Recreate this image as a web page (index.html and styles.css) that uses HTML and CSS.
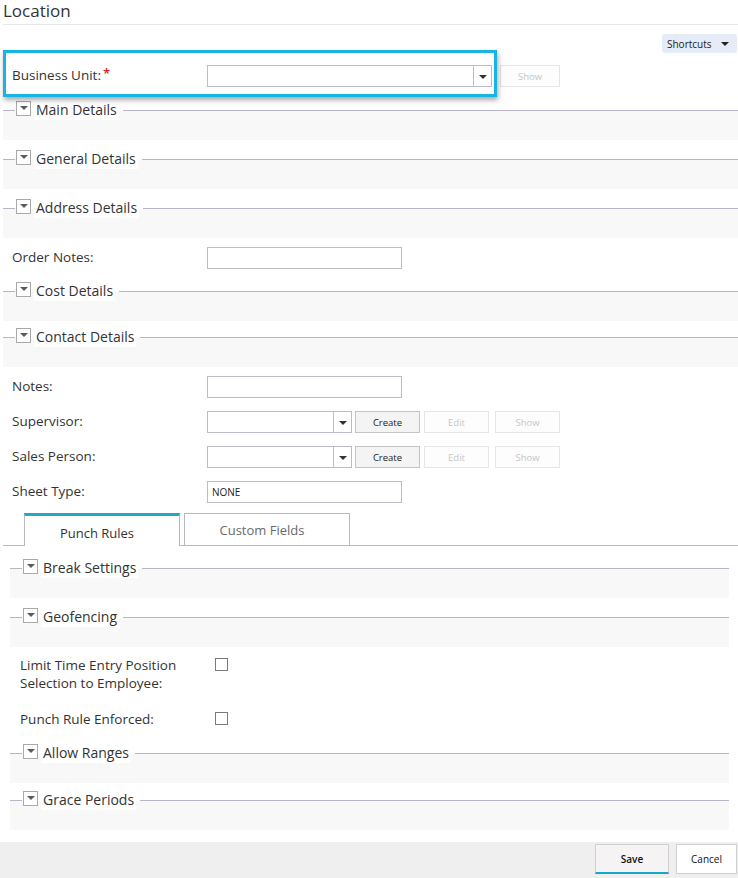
FILE: index.html
```html
<!DOCTYPE html>
<html lang="en">
<head>
<meta charset="utf-8">
<title>Location</title>
<link rel="stylesheet" href="styles.css">
</head>
<body>
<div class="page">
  <header class="page-head"><h1>Location</h1></header>

  <div class="toolbar">
    <button class="shortcuts" type="button">Shortcuts <span class="caret"></span></button>
  </div>

  <div class="form">
    <div class="focus-row">
      <div class="focus-box">
        <label class="lbl">Business Unit:<span class="req">*</span></label>
        <div class="combo combo-wide"><span class="combo-arrow"><span class="caret"></span></span></div>
      </div>
      <button class="btn btn-off btn-show-bu" type="button">Show</button>
    </div>

    <section class="sec sec-first">
      <div class="sec-head"><span class="rule-l"></span><span class="toggle"><span class="tri"></span></span><span class="sec-title">Main Details</span><span class="rule"></span></div>
      <div class="sec-body"></div>
    </section>
    <section class="sec">
      <div class="sec-head"><span class="rule-l"></span><span class="toggle"><span class="tri"></span></span><span class="sec-title">General Details</span><span class="rule"></span></div>
      <div class="sec-body"></div>
    </section>
    <section class="sec">
      <div class="sec-head"><span class="rule-l"></span><span class="toggle"><span class="tri"></span></span><span class="sec-title">Address Details</span><span class="rule"></span></div>
      <div class="sec-body"></div>
    </section>

    <div class="row row-after-sec">
      <label class="lbl">Order Notes:</label>
      <div class="input"></div>
    </div>

    <section class="sec sec-after-row">
      <div class="sec-head"><span class="rule-l"></span><span class="toggle"><span class="tri"></span></span><span class="sec-title">Cost Details</span><span class="rule"></span></div>
      <div class="sec-body"></div>
    </section>
    <section class="sec sec-tight">
      <div class="sec-head"><span class="rule-l"></span><span class="toggle"><span class="tri"></span></span><span class="sec-title">Contact Details</span><span class="rule"></span></div>
      <div class="sec-body"></div>
    </section>

    <div class="row row-after-sec">
      <label class="lbl">Notes:</label>
      <div class="input"></div>
    </div>
    <div class="row">
      <label class="lbl">Supervisor:</label>
      <div class="combo combo-short"><span class="combo-arrow"><span class="caret"></span></span></div>
      <button class="btn btn-create" type="button">Create</button>
      <button class="btn btn-off btn-edit" type="button">Edit</button>
      <button class="btn btn-off btn-show" type="button">Show</button>
    </div>
    <div class="row">
      <label class="lbl">Sales Person:</label>
      <div class="combo combo-short"><span class="combo-arrow"><span class="caret"></span></span></div>
      <button class="btn btn-create" type="button">Create</button>
      <button class="btn btn-off btn-edit" type="button">Edit</button>
      <button class="btn btn-off btn-show" type="button">Show</button>
    </div>
    <div class="row">
      <label class="lbl">Sheet Type:</label>
      <div class="input">NONE</div>
    </div>

    <div class="tab-strip">
      <div class="tab tab-active">Punch Rules</div>
      <div class="tab">Custom Fields</div>
    </div>

    <div class="tab-panel">
      <section class="sec sec-panel-first">
        <div class="sec-head"><span class="rule-l"></span><span class="toggle"><span class="tri"></span></span><span class="sec-title">Break Settings</span><span class="rule"></span></div>
        <div class="sec-body"></div>
      </section>
      <section class="sec">
        <div class="sec-head"><span class="rule-l"></span><span class="toggle"><span class="tri"></span></span><span class="sec-title">Geofencing</span><span class="rule"></span></div>
        <div class="sec-body"></div>
      </section>

      <div class="cb-row cb-row-first">
        <label class="lbl lbl-wrap">Limit Time Entry Position Selection to Employee:</label>
        <span class="checkbox"></span>
      </div>
      <div class="cb-row cb-row-second">
        <label class="lbl lbl-wrap">Punch Rule Enforced:</label>
        <span class="checkbox"></span>
      </div>

      <section class="sec sec-after-cb">
        <div class="sec-head"><span class="rule-l"></span><span class="toggle"><span class="tri"></span></span><span class="sec-title">Allow Ranges</span><span class="rule"></span></div>
        <div class="sec-body"></div>
      </section>
      <section class="sec sec-close">
        <div class="sec-head"><span class="rule-l"></span><span class="toggle"><span class="tri"></span></span><span class="sec-title">Grace Periods</span><span class="rule"></span></div>
        <div class="sec-body"></div>
      </section>
    </div>
  </div>

  <footer class="footer">
    <button class="fbtn fbtn-save" type="button">Save</button>
    <button class="fbtn fbtn-cancel" type="button">Cancel</button>
  </footer>
</div>
</body>
</html>
```

FILE: styles.css
```css
html, body {
  margin: 0;
  padding: 0;
  background: #fff;
}

body {
  font-family: "Open Sans", "Noto Sans", "DejaVu Sans", sans-serif;
  color: #333;
  width: 738px;
  height: 878px;
  overflow: hidden;
}

button {
  font-family: inherit;
  cursor: pointer;
}

/* page title */
.page-head {
  margin-left: 3px;
  height: 24px;
  border-bottom: 1px solid #e8e8ec;
}

.page-head h1 {
  margin: 0;
  padding-top: 1px;
  font-size: 17px;
  font-weight: 400;
  line-height: 20px;
}

/* shortcuts menu */
.toolbar {
  height: 25px;
  display: flex;
  justify-content: flex-end;
  align-items: flex-start;
}

.shortcuts {
  margin: 9px 1px 0 0;
  width: 75px;
  height: 19px;
  padding: 0 0 0 5px;
  border: none;
  border-radius: 3px;
  background: #e6ebf8;
  color: #222;
  font-size: 10px;
  display: flex;
  align-items: center;
  gap: 9px;
}

.caret {
  display: inline-block;
  width: 0;
  height: 0;
  border-left: 4px solid transparent;
  border-right: 4px solid transparent;
  border-top: 4px solid #222;
}

/* form body */
.form {
  padding-left: 3px;
}

.lbl {
  flex: none;
  width: 195px;
  font-size: 13.5px;
  line-height: 18px;
}

.req {
  color: #e62020;
  font-size: 13px;
  font-weight: 600;
  margin-left: 2px;
  position: relative;
  top: -2px;
}

.focus-row {
  display: flex;
  align-items: flex-start;
}

.focus-box {
  display: flex;
  align-items: center;
  width: 494px;
  box-sizing: border-box;
  border: 3px solid #18b4e4;
  padding: 12px 2px 7px 6px;
  box-shadow: 1px 3px 5px rgba(0, 0, 0, 0.35);
  background: #fff;
  position: relative;
  z-index: 1;
}

.focus-box .lbl {
  margin-top: -3px;
}

.row {
  display: flex;
  align-items: center;
  height: 22px;
  padding-left: 9px;
  margin-top: 13px;
}

.row .lbl {
  margin-top: -2px;
}

.row-after-sec {
  margin-top: 9px;
}

.input,
.combo {
  flex: none;
  box-sizing: border-box;
  height: 22px;
  border: 1px solid #bcbccc;
  background: #fff;
}

.input {
  width: 195px;
  font-size: 10px;
  line-height: 20px;
  padding-left: 4px;
  color: #222;
}

.combo {
  display: flex;
  justify-content: flex-end;
}

.combo-wide { width: 285px; }
.combo-short { width: 145px; }

.combo-arrow {
  width: 17px;
  border-left: 1px solid #bcbccc;
  display: flex;
  align-items: center;
  justify-content: center;
}

.combo-arrow .caret {
  border-top-color: #333;
  margin-top: 1px;
}

/* small action buttons */
.btn {
  flex: none;
  box-sizing: border-box;
  height: 22px;
  padding: 0;
  font-size: 9.5px;
  border: 1px solid #c4c4c4;
  background: #f4f4f4;
  color: #222;
}

.btn-off {
  border-color: #e6e6e6;
  background: #fdfdfd;
  color: #c6c6c6;
}

.btn-show-bu {
  width: 60px;
  margin: 15px 0 0 3px;
}

.btn-create { width: 65px; margin-left: 3px; }
.btn-edit { width: 65px; margin-left: 4px; }
.btn-show { width: 65px; margin-left: 6px; }

/* collapsible sections */
.sec {
  margin-top: 9px;
  background: linear-gradient(#fff 0, #fff 11px, #f8f8f8 11px);
}

.sec-first { margin-top: 3px; }
.sec-after-row { margin-top: 12px; }
.sec-tight { margin-top: 6px; }

.sec-head {
  display: flex;
  align-items: center;
  height: 20px;
}

.rule-l,
.rule {
  height: 1px;
  background: #b6b6c8;
}

.rule-l {
  width: 12px;
  flex: none;
}

.rule {
  flex: 1;
  margin-left: 4px;
}

.toggle {
  flex: none;
  box-sizing: border-box;
  width: 15px;
  height: 15px;
  margin: -3px 3px 0 1px;
  border: 1px solid #a9a9a9;
  background: #fff;
  display: flex;
  justify-content: center;
  align-items: center;
}

.tri {
  width: 0;
  height: 0;
  border-left: 4px solid transparent;
  border-right: 4px solid transparent;
  border-top: 4px solid #5a5a5a;
  margin-top: -2px;
}

.sec-title {
  flex: none;
  background: #fff;
  padding: 0 2px;
  font-size: 14px;
  line-height: 20px;
  height: 20px;
}

.sec-body {
  height: 20px;
}

/* tabs */
.tab-strip {
  margin-top: 10px;
  height: 32px;
  border-bottom: 1px solid #b8b8c8;
  display: flex;
  align-items: flex-start;
  padding-left: 21px;
  gap: 4px;
}

.tab {
  box-sizing: border-box;
  width: 166px;
  height: 33px;
  padding-right: 10px;
  border: 1px solid #b8b8c8;
  background: #fff;
  color: #6a6a6a;
  font-size: 13px;
  text-align: center;
  line-height: 33px;
}

.tab-active {
  width: 156px;
  height: 33px;
  border-top: 3px solid #22a9c6;
  border-bottom: none;
  color: #333;
  line-height: 34px;
  position: relative;
  z-index: 1;
}

.tab-panel {
  padding: 0 9px 0 7px;
}

.sec-panel-first { margin-top: 12px; }
.sec-after-cb { margin-top: 15px; }
.sec-close { margin-top: 7px; }

/* checkbox rows */
.cb-row {
  display: flex;
  align-items: flex-start;
  padding-left: 10px;
}

.cb-row-first { margin-top: 10px; }
.cb-row-second { margin-top: 19px; height: 17px; }

.lbl-wrap {
  line-height: 17.5px;
  padding-right: 14px;
  box-sizing: border-box;
}

.checkbox {
  flex: none;
  box-sizing: border-box;
  width: 13px;
  height: 13px;
  border: 1px solid #7a7a7a;
  background: #fff;
  margin-top: 1px;
}

/* bottom bar */
.footer {
  margin-top: 12px;
  height: 36px;
  background: #efefef;
  display: flex;
  justify-content: flex-end;
  align-items: flex-start;
}

.fbtn {
  box-sizing: border-box;
  margin-top: 2px;
  height: 30px;
  padding: 0;
  font-size: 10px;
  color: #111;
  border: 1px solid #cfcfcf;
}

.fbtn-save {
  width: 74px;
  background: #f6f3f4;
  border-bottom: 2px solid #15a6c9;
  font-weight: 600;
}

.fbtn-cancel {
  width: 61px;
  margin: 2px 1px 0 7px;
  background: #fff;
}
```
